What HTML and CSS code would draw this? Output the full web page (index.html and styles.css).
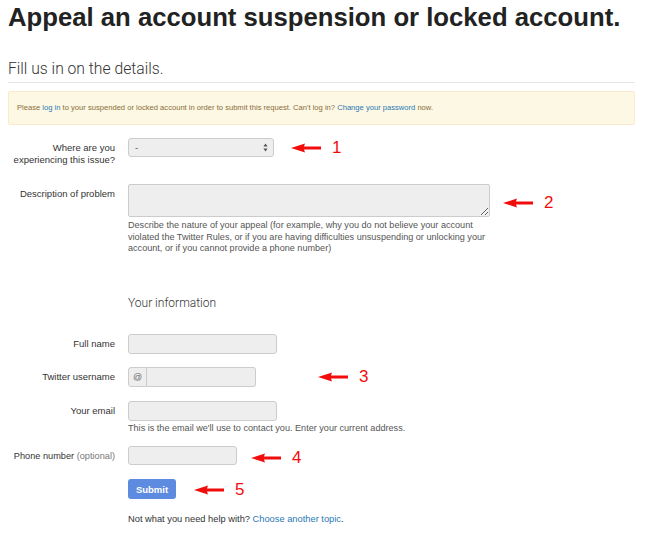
FILE: index.html
```html
<!DOCTYPE html>
<html lang="en">
<head>
<meta charset="utf-8">
<title>Appeal an account suspension or locked account</title>
<link rel="stylesheet" href="styles.css">
</head>
<body>
<div class="page">
  <h1 class="title">Appeal an account suspension or locked account.</h1>
  <h2 class="subtitle">Fill us in on the details.</h2>
  <hr class="rule">
  <div class="alert">Please <a href="#">log in</a> to your suspended or locked account in order to submit this request. Can't log in? <a href="#">Change your password</a> now.</div>

  <form class="form">
    <div class="row row-issue">
      <label class="label">Where are you<br>experiencing this issue?</label>
      <div class="control">
        <div class="select"><span class="select-value">-</span>
          <svg class="select-caret" width="5" height="9" viewBox="0 0 5 9"><path d="M2.5 0.5 L4.6 3.4 L0.4 3.4 Z M2.5 8.5 L4.6 5.6 L0.4 5.6 Z" fill="#555"/></svg>
        </div>
      </div>
      <div class="note note-1">
        <svg class="arrow" width="30" height="10" viewBox="0 0 30 10"><path d="M0 5 L14 0.5 L13 3.6 L30 3.6 L30 6.4 L13 6.4 L14 9.5 Z" fill="#f20d0d"/></svg>
        <span class="num">1</span>
      </div>
    </div>

    <div class="row row-desc">
      <label class="label">Description of problem</label>
      <div class="control">
        <textarea class="textarea"></textarea>
        <p class="help">Describe the nature of your appeal (for example, why you do not believe your account violated the Twitter Rules, or if you are having difficulties unsuspending or unlocking your account, or if you cannot provide a phone number)</p>
      </div>
      <div class="note note-2">
        <svg class="arrow" width="30" height="10" viewBox="0 0 30 10"><path d="M0 5 L14 0.5 L13 3.6 L30 3.6 L30 6.4 L13 6.4 L14 9.5 Z" fill="#f20d0d"/></svg>
        <span class="num">2</span>
      </div>
    </div>

    <div class="row row-section">
      <div class="label"></div>
      <div class="control"><h3 class="section-title">Your information</h3></div>
    </div>

    <div class="row row-name">
      <label class="label">Full name</label>
      <div class="control"><input class="input input-wide" type="text"></div>
    </div>

    <div class="row row-twitter">
      <label class="label">Twitter username</label>
      <div class="control">
        <div class="input-group"><span class="addon">@</span><input class="input input-group-field" type="text"></div>
      </div>
      <div class="note note-3">
        <svg class="arrow" width="30" height="10" viewBox="0 0 30 10"><path d="M0 5 L14 0.5 L13 3.6 L30 3.6 L30 6.4 L13 6.4 L14 9.5 Z" fill="#f20d0d"/></svg>
        <span class="num">3</span>
      </div>
    </div>

    <div class="row row-email">
      <label class="label">Your email</label>
      <div class="control">
        <input class="input input-wide" type="text">
        <p class="help help-email">This is the email we'll use to contact you. Enter your current address.</p>
      </div>
    </div>

    <div class="row row-phone">
      <label class="label">Phone number <span class="optional">(optional)</span></label>
      <div class="control"><input class="input input-short" type="text"></div>
      <div class="note note-4">
        <svg class="arrow" width="30" height="10" viewBox="0 0 30 10"><path d="M0 5 L14 0.5 L13 3.6 L30 3.6 L30 6.4 L13 6.4 L14 9.5 Z" fill="#f20d0d"/></svg>
        <span class="num">4</span>
      </div>
    </div>

    <div class="row row-submit">
      <div class="label"></div>
      <div class="control"><button class="button" type="button">Submit</button></div>
      <div class="note note-5">
        <svg class="arrow" width="30" height="10" viewBox="0 0 30 10"><path d="M0 5 L14 0.5 L13 3.6 L30 3.6 L30 6.4 L13 6.4 L14 9.5 Z" fill="#f20d0d"/></svg>
        <span class="num">5</span>
      </div>
    </div>

    <div class="row row-footer">
      <div class="label"></div>
      <div class="control"><p class="footer-text">Not what you need help with? <a href="#">Choose another topic</a>.</p></div>
    </div>
  </form>
</div>
</body>
</html>
```

FILE: styles.css
```css
* { box-sizing: border-box; }

html, body {
  margin: 0;
  padding: 0;
  background: #fff;
}

body {
  font-family: "Liberation Sans", Arial, sans-serif;
  color: #333;
}

a { color: #2a78b6; text-decoration: none; }

.page {
  width: 635px;
  padding-left: 8px;
}

.title {
  margin: 2px 0 0;
  font-size: 25.7px;
  line-height: 30px;
  font-weight: bold;
  color: #222;
  white-space: nowrap;
}

.subtitle {
  margin: 27px 0 0;
  font-family: Roboto, "Liberation Sans", sans-serif;
  font-weight: 300;
  font-size: 15.7px;
  line-height: 20px;
  color: #333;
}

.rule {
  margin: 3px 0 0;
  border: 0;
  border-top: 1px solid #e6e6e6;
  height: 0;
}

.alert {
  margin-top: 8px;
  padding: 10px 7px 10px 8px;
  background: #fcf8e3;
  border: 1px solid #faebcc;
  border-radius: 2px;
  color: #8a6d3b;
  font-size: 7.6px;
  line-height: 12px;
}

.form {
  display: flex;
  flex-direction: column;
}

.row {
  position: relative;
  display: flex;
  gap: 13px;
  align-items: flex-start;
}

.label {
  width: 107px;
  flex: none;
  text-align: right;
  font-size: 9.5px;
  line-height: 12px;
  padding-top: 4px;
  color: #333;
}

.row-phone .label { font-size: 9.2px; }

.optional { color: #777; }

.control {
  display: flex;
  flex-direction: column;
  align-items: flex-start;
}

.row-issue { margin-top: 13px; }
.row-desc { margin-top: 18px; }
.row-section { margin-top: 40px; }
.row-name { margin-top: 23px; }
.row-twitter { margin-top: 13px; }
.row-email { margin-top: 14px; }
.row-phone { margin-top: 12px; }
.row-submit { margin-top: 14px; }
.row-footer { margin-top: 14px; }

.select {
  width: 146px;
  height: 19px;
  background: #eeeeee;
  border: 1px solid #cccccc;
  border-radius: 3px;
  display: flex;
  align-items: center;
  justify-content: space-between;
  padding: 0 5px 0 6px;
  font-size: 9.5px;
  color: #555;
}

.textarea {
  display: block;
  width: 362px;
  height: 33px;
  margin: 0;
  background: #eeeeee;
  border: 1px solid #cccccc;
  border-radius: 2px;
  resize: vertical;
  font: inherit;
}

.help {
  margin: 3px 0 0;
  width: 370px;
  font-size: 9.1px;
  line-height: 11.5px;
  color: #555;
}

.help-email {
  margin-top: 2px;
  width: auto;
  white-space: nowrap;
}

.section-title {
  margin: 0;
  font-family: Roboto, "Liberation Sans", sans-serif;
  font-weight: 300;
  font-size: 12px;
  line-height: 16px;
  color: #333;
}

.input {
  display: block;
  margin: 0;
  height: 20px;
  background: #eeeeee;
  border: 1px solid #cccccc;
  border-radius: 3px;
  font: inherit;
  padding: 0 5px;
}

.input-wide { width: 149px; }
.input-short { width: 109px; height: 19px; }

.input-group {
  display: flex;
  width: 128px;
  height: 20px;
}

.addon {
  width: 19px;
  flex: none;
  display: flex;
  align-items: center;
  justify-content: center;
  background: #eeeeee;
  border: 1px solid #cccccc;
  border-radius: 3px 0 0 3px;
  font-size: 9px;
  color: #666;
}

.input-group-field {
  flex: 1;
  width: auto;
  min-width: 0;
  height: 20px;
  border-left: 0;
  border-radius: 0 3px 3px 0;
}

.button {
  width: 48px;
  height: 20px;
  margin: 0;
  padding: 0;
  border: 0;
  border-radius: 3px;
  background: #5d8bdf;
  color: #fff;
  font-family: "Liberation Sans", Arial, sans-serif;
  font-weight: bold;
  font-size: 9.5px;
}

.footer-text {
  margin: 0;
  font-size: 9.3px;
  line-height: 12px;
  color: #333;
}

.note {
  position: absolute;
  display: flex;
  align-items: center;
  gap: 11px;
  height: 20px;
}

.arrow { display: block; }

.num {
  font-size: 17px;
  line-height: 20px;
  color: #f20d0d;
}

.note-1 { left: 283px; top: 0; }
.note-2 { left: 495px; top: 9px; }
.note-3 { left: 310px; top: 0; }
.note-4 { left: 243px; top: 2px; }
.note-5 { left: 186px; top: 1px; }
```
